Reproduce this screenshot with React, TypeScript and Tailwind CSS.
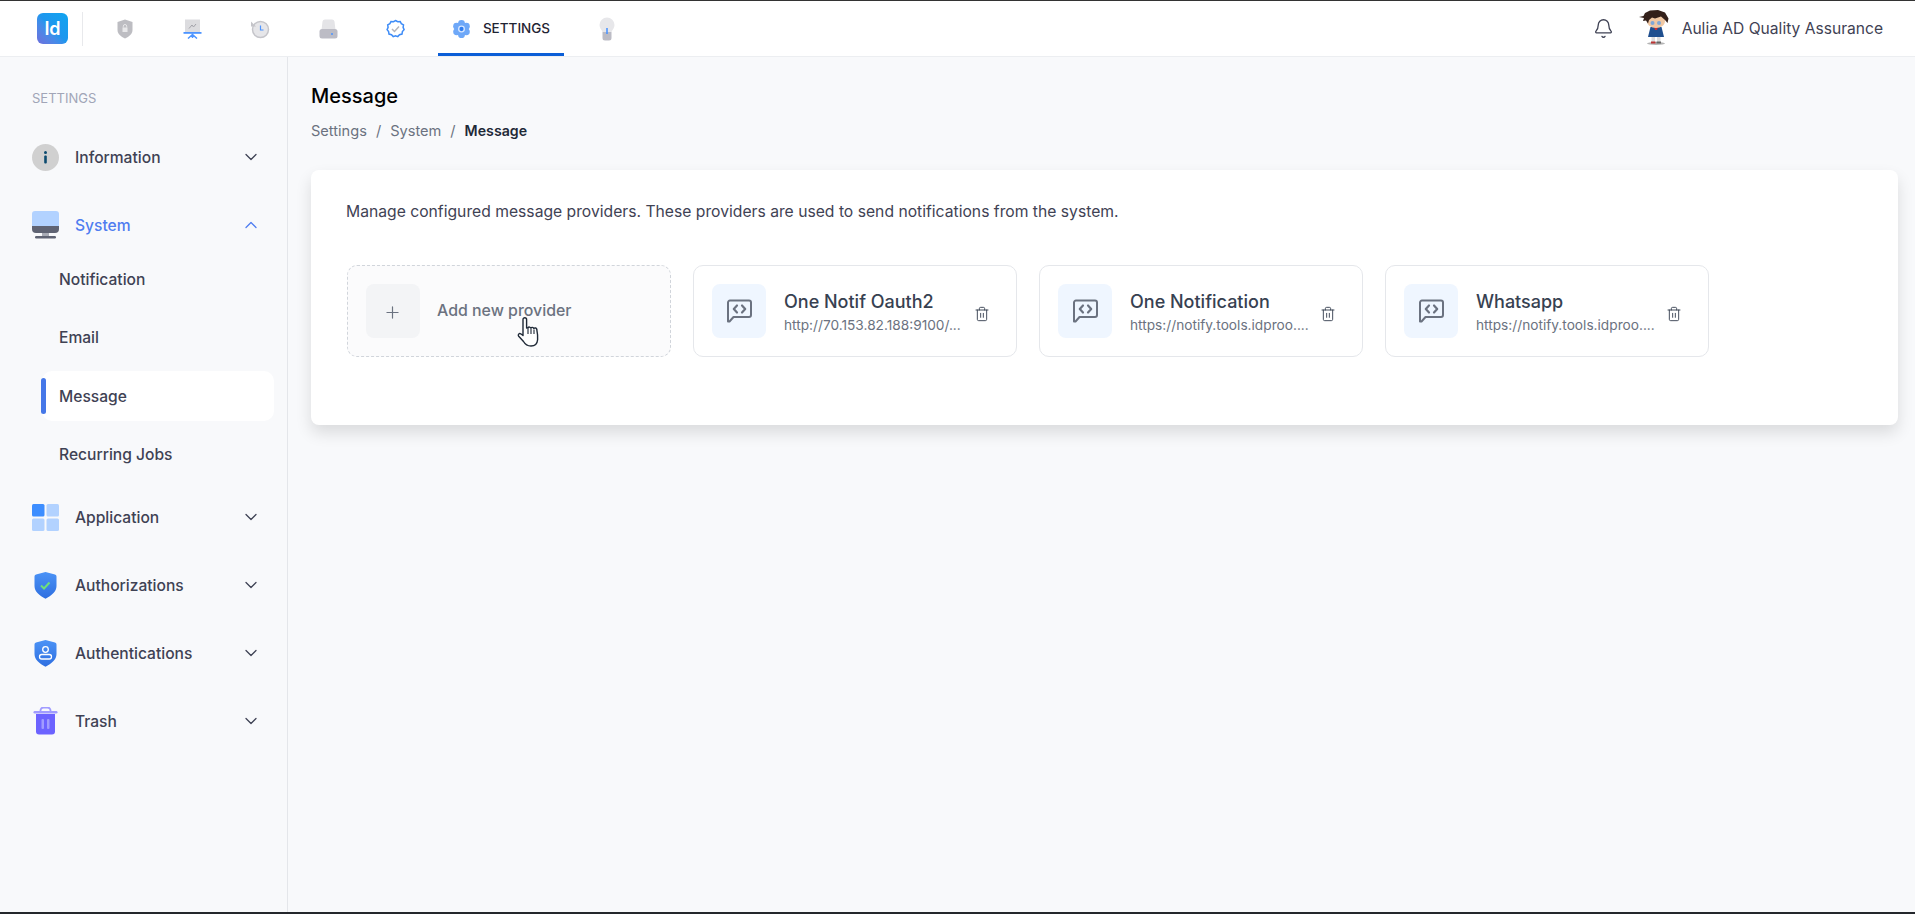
import { Bell, ChevronDown, ChevronUp, Plus, Trash2 } from "lucide-react";
import type { ReactNode } from "react";

const ShieldNavIcon = () => (
  <svg width="18" height="20" viewBox="0 0 18 20">
    <path d="M9 0.500 16.500 3v8c0 4-3.500 6.800-7.500 8.500C5 17.800 1.500 15 1.500 11V3z" fill="#bdbdc2" />
    <path d="M6.500 8.500h5v4.500h-5z" fill="#e8e8ea" />
    <path d="M7.300 8.500V7.200a1.700 1.700 0 0 1 3.400 0v1.300" fill="none" stroke="#e8e8ea" strokeWidth="1" />
  </svg>
);

const BoardNavIcon = () => (
  <svg width="19" height="20" viewBox="0 0 19 20">
    <rect x="2" y="0.500" width="15" height="13" fill="#dcdcdf" />
    <path d="M6 9.500 9 6l1.500 2L13 5" fill="none" stroke="#a3a3aa" strokeWidth="1" />
    <rect x="0.500" y="13" width="18" height="1.800" fill="#4d94ff" />
    <path d="M9.500 14.500V19M9.500 15.500 5 19.500M9.500 15.500l4.500 4" stroke="#4d94ff" strokeWidth="1.500" fill="none" />
  </svg>
);

const HistoryNavIcon = () => (
  <svg width="20" height="20" viewBox="0 0 20 20">
    <circle cx="10.500" cy="10.500" r="8" fill="#e6e6e9" stroke="#c5c5ca" strokeWidth="1.500" />
    <path d="M1 2.500v5h5" fill="#c5c5ca" />
    <path d="M10.500 6.500v4.500h3" fill="none" stroke="#4d94ff" strokeWidth="1.200" />
  </svg>
);

const DiskNavIcon = () => (
  <svg width="19" height="20" viewBox="0 0 19 20">
    <path d="M2.500 11 3.500 2.500A2.500 2.500 0 0 1 6 0.500h7a2.500 2.500 0 0 1 2.500 2L16.500 11z" fill="#e4e4e7" />
    <rect x="0.500" y="10" width="18" height="9.500" rx="2.500" fill="#bcbcc5" />
    <circle cx="13" cy="15" r="1" fill="#4d94ff" />
  </svg>
);

const BadgeNavIcon = () => (
  <svg width="19" height="20" viewBox="0 0 19 20">
    <path
      d="M9.500 1.500l2.200 1.200 2.500-.2 1.100 2.200 2.200 1.200-.4 2.500 1 2.300-1.700 1.900-.4 2.500-2.500.6-1.700 1.900-2.300-.9-2.300.9-1.700-1.900-2.500-.6-.4-2.500L1.100 10.700l1-2.300-.4-2.500 2.200-1.200L5 2.500l2.500.2z"
      fill="#fff"
      stroke="#3e8cf7"
      strokeWidth="1.500"
    />
    <path d="M6 10l2.500 2.500L13 7.500" fill="none" stroke="#b5b5bb" strokeWidth="1.500" />
  </svg>
);

const GearNavIcon = () => (
  <svg width="19" height="20" viewBox="0 0 24 24">
    <g fill="#6ea8f8">
      <circle cx="12" cy="12" r="8.500" />
      <circle cx="12" cy="4.800" r="4.300" />
      <circle cx="12" cy="19.200" r="4.300" />
      <circle cx="5.800" cy="8.400" r="4.300" />
      <circle cx="18.200" cy="8.400" r="4.300" />
      <circle cx="5.800" cy="15.600" r="4.300" />
      <circle cx="18.200" cy="15.600" r="4.300" />
    </g>
    <circle cx="12" cy="12" r="4.400" fill="#d6e6ff" />
    <circle cx="12" cy="12" r="2.700" fill="#2f7df0" />
  </svg>
);

const BulbNavIcon = () => (
  <svg width="16" height="24" viewBox="0 0 16 24">
    <path d="M8 0.500a7.500 7.500 0 0 1 7.500 7.500c0 3-2 4.500-3 7H3.500c-1-2.500-3-4-3-7A7.500 7.500 0 0 1 8 0.500z" fill="#e7e7ea" />
    <path d="M3.500 15h9v6a2.500 2.500 0 0 1-2.500 2.500H6A2.500 2.500 0 0 1 3.500 21z" fill="#bcbcc5" />
    <rect x="7.200" y="11" width="1.600" height="6" fill="#4d94ff" />
  </svg>
);

const InfoIcon = () => (
  <svg width="27" height="27" viewBox="0 0 27 27">
    <circle cx="13.500" cy="13.500" r="13.500" fill="#d0d0d0" />
    <circle cx="13.500" cy="8.500" r="1.500" fill="#0b4a6f" />
    <rect x="12.200" y="11.500" width="2.600" height="8" rx="1" fill="#0b4a6f" />
  </svg>
);

const MonitorIcon = () => (
  <svg width="27" height="28" viewBox="0 0 27 28">
    <path d="M0 3a3 3 0 0 1 3-3h21a3 3 0 0 1 3 3v12H0z" fill="#b2d2ff" />
    <path d="M0 15h27v3a4 4 0 0 1-4 4H4a4 4 0 0 1-4-4z" fill="#5f6373" />
    <rect x="10" y="22" width="7" height="3" fill="#a8abb5" />
    <rect x="3" y="25" width="21" height="2.500" rx="1.200" fill="#5f6373" />
  </svg>
);

const GridIcon = () => (
  <svg width="27" height="27" viewBox="0 0 27 27">
    <rect width="12.500" height="12.500" rx="1.500" fill="#3d8eff" />
    <rect x="14.500" width="12.500" height="12.500" rx="1.500" fill="#b2d2ff" />
    <rect y="14.500" width="12.500" height="12.500" rx="1.500" fill="#b2d2ff" />
    <rect x="14.500" y="14.500" width="12.500" height="12.500" rx="1.500" fill="#b2d2ff" />
  </svg>
);

const ShieldBase = ({ id, children }: { id: string; children: ReactNode }) => (
  <svg width="23" height="27" viewBox="0 0 23 27">
    <defs>
      <linearGradient id={id} x1="0" y1="0" x2="0" y2="1">
        <stop offset="0" stopColor="#4b93f6" />
        <stop offset="1" stopColor="#2f6fe0" />
      </linearGradient>
    </defs>
    <path d="M11.500 0 21 2.500a2 2 0 0 1 1.500 2V14c0 5.500-5 9.800-11 12.700C5.500 23.800.5 19.500.5 14V4.500a2 2 0 0 1 1.500-2z" fill={`url(#${id})`} />
    {children}
  </svg>
);

const TrashIcon = () => (
  <svg width="25" height="28" viewBox="0 0 25 28">
    <path d="M7.500 4V3.500a3 3 0 0 1 3-3h4a3 3 0 0 1 3 3V4" fill="none" stroke="#a19cff" strokeWidth="1.800" />
    <rect x="0.500" y="4" width="24" height="2.500" rx="1.200" fill="#a19cff" />
    <path d="M3 7h19v17.500a3 3 0 0 1-3 3H6a3 3 0 0 1-3-3z" fill="#6c63ff" />
    <rect x="8.500" y="12" width="2.500" height="10" rx="1" fill="#a19cff" />
    <rect x="14" y="12" width="2.500" height="10" rx="1" fill="#a19cff" />
  </svg>
);

const MessageCodeIcon = () => (
  <svg width="27" height="25" viewBox="0 0 27 25" fill="none" stroke="#6b7280" strokeWidth="2">
    <path d="M2 22.500V3.500a2 2 0 0 1 2-2h19a2 2 0 0 1 2 2V16a2 2 0 0 1-2 2H7.500L3.500 22.500z" strokeLinejoin="round" />
    <path d="M11 6.500 7.800 10 11 13.500M16 6.500l3.200 3.500-3.200 3.500" strokeLinecap="round" strokeLinejoin="round" strokeWidth="2.200" />
  </svg>
);

const Avatar = () => (
  <svg width="30" height="37" viewBox="0 0 30 37">
    <ellipse cx="17" cy="33.500" rx="9" ry="1.500" fill="#b5b5b5" />
    <rect x="12.500" y="27" width="3.500" height="5" fill="#dcdcdc" />
    <rect x="18" y="27" width="3.500" height="5" fill="#dcdcdc" />
    <rect x="12" y="31.500" width="4.500" height="2" fill="#b33" />
    <rect x="17.500" y="31.500" width="4.500" height="2" fill="#666" />
    <path d="M11.500 17h11l2.500 10H9z" fill="#1f4f8f" />
    <path d="M15 17h4l-1 3h-2z" fill="#c33" />
    <path d="M8 11c0-4 4-6 9-6s9 2 9 6-4 7-9 7-9-3-9-7z" fill="#f0c8a4" />
    <circle cx="13.500" cy="13" r="2" fill="#7fa8d8" />
    <circle cx="20" cy="13" r="2" fill="#7fa8d8" />
    <path d="M0 7 4.500 6 6 3l5-2.500 8-.5 7 2.500 3.500 6-1 4.500-2.500-3-4-3.500-6 2-3-1-3 2.500-1 3.500-2-3-3 .5 1-3z" fill="#33201a" />
  </svg>
);

const HandCursor = () => (
  <svg width="23" height="31" viewBox="0 0 23 31" className="absolute left-[169px] top-[51px]">
    <path
      d="M6 2.500a1.800 1.800 0 0 1 3.600 0V11l1.400-.4a1.700 1.700 0 0 1 2.800.5 1.700 1.700 0 0 1 3 .4 1.700 1.700 0 0 1 3 1.200c.8 4 1 7 .8 10-.3 3.500-2.500 6.300-6.600 6.300-3.800 0-5.800-1.500-7.500-4.500L1.500 19c-.8-1.300.6-3 2.200-2.200L6 18.500z"
      fill="#fff"
      stroke="#1f2937"
      strokeWidth="1.400"
      strokeLinejoin="round"
    />
    <path d="M11 11v6M14 11.500V17M17 12.500V17" stroke="#1f2937" strokeWidth="1.100" fill="none" />
  </svg>
);

const navIcons = [
  <ShieldNavIcon key="shield" />,
  <BoardNavIcon key="board" />,
  <HistoryNavIcon key="history" />,
  <DiskNavIcon key="disk" />,
  <BadgeNavIcon key="badge" />,
];

const SideRow = ({ icon, label, open = false }: { icon: ReactNode; label: string; open?: boolean }) => (
  <div className="flex h-[54px] items-center pl-8 pr-[26px]">
    <div className="flex w-[27px] shrink-0 justify-center">{icon}</div>
    <span className={`ml-4 flex-1 pt-px text-[15.6px] font-[450] ${open ? "text-[#4f7df0]" : "text-[#3f4254]"}`}>{label}</span>
    {open ? (
      <ChevronUp size={20} strokeWidth={1.5} className="text-[#4f7df0]" />
    ) : (
      <ChevronDown size={20} strokeWidth={1.5} className="text-[#3f4254]" />
    )}
  </div>
);

const SubRow = ({ label, active = false }: { label: string; active?: boolean }) => (
  <div
    className={`relative ml-[42px] mr-[13px] flex h-[50px] items-center pl-[17px] pt-px text-[15.6px] font-[450] text-[#3f4254] ${
      active ? "mt-px rounded-[10px] bg-white" : ""
    }`}
  >
    {active && <div className="absolute left-[-1px] top-[7px] h-9 w-[5px] rounded-sm bg-[#4577e8]" />}
    {label}
  </div>
);

const ProviderCard = ({ name, url }: { name: string; url: string }) => (
  <div className="flex h-[92px] w-[323.5px] items-center rounded-[10px] border border-[#e5e7eb] bg-white pl-[18px] pr-[26px]">
    <div className="flex h-[54px] w-[54px] shrink-0 items-center justify-center rounded-lg bg-[#eff6ff]">
      <MessageCodeIcon />
    </div>
    <div className="ml-[18px] min-w-0 flex-1">
      <div className="text-[18px] leading-[26px] font-[450] text-[#374151]">{name}</div>
      <div className="mt-[1px] whitespace-nowrap text-[13.7px] leading-[18px] text-[#6b7280]">{url}</div>
    </div>
    <Trash2 size={16} strokeWidth={1.4} className="ml-1 mt-[6px] shrink-0 text-[#374151]" />
  </div>
);

export default function App() {
  return (
    <div className="flex h-screen w-full flex-col overflow-hidden border-t border-b-2 border-t-[#333333] border-b-[#24272c] bg-[#f8f9fb] font-[Inter,sans-serif]">
      <header className="flex h-[56px] shrink-0 items-center border-b border-[#eceef1] bg-white pl-[37px] pr-8">
        <div className="flex h-[31px] w-[31px] items-center justify-center rounded-md bg-gradient-to-tr from-[#6b6fdc] via-[#1e96ee] to-[#0ea5f0] text-[18px] font-semibold text-white">
          Id
        </div>
        <div className="ml-[14px] h-[34px] w-px bg-[#e8e9ec]" />
        <div className="ml-[33px] flex items-center gap-[48.5px]">{navIcons}</div>
        <div className="relative ml-[33px] flex h-[55px] w-[126px] items-center justify-center gap-[12px] border-b-[3px] border-[#0b5ed7] pt-[3px]">
          <GearNavIcon />
          <span className="text-[13.500px] font-medium text-[#1f2433]">SETTINGS</span>
        </div>
        <div className="ml-[35px]">
          <BulbNavIcon />
        </div>
        <div className="ml-auto flex items-center">
          <Bell size={21} strokeWidth={1.5} className="text-[#3f4254]" />
          <div className="ml-[25px]">
            <Avatar />
          </div>
          <span className="ml-[13px] text-[15.6px] text-[#3f4254]">Aulia AD Quality Assurance</span>
        </div>
      </header>

      <div className="flex min-h-0 flex-1">
        <aside className="w-[288px] shrink-0 border-r border-[#e4e6ea] pt-[31px]">
          <div className="pl-8 text-[13px] leading-5 text-[#a1a5b7]">SETTINGS</div>
          <nav className="mt-[22px] flex flex-col gap-[14px]">
            <SideRow icon={<InfoIcon />} label="Information" />
            <div className="-mb-[3px]">
              <SideRow icon={<MonitorIcon />} label="System" open />
              <div className="mt-[2px] flex flex-col gap-2">
                <SubRow label="Notification" />
                <SubRow label="Email" />
                <SubRow label="Message" active />
                <SubRow label="Recurring Jobs" />
              </div>
            </div>
            <SideRow icon={<GridIcon />} label="Application" />
            <SideRow
              icon={
                <ShieldBase id="shieldCheck">
                  <path d="M7 13.500l3 3 5.500-6" fill="none" stroke="#6fe07a" strokeWidth="2" />
                </ShieldBase>
              }
              label="Authorizations"
            />
            <SideRow
              icon={
                <ShieldBase id="shieldUser">
                  <circle cx="11.500" cy="9.500" r="2.800" fill="none" stroke="#fff" strokeWidth="1.300" />
                  <rect x="5.500" y="14.500" width="12" height="4.500" rx="2.200" fill="none" stroke="#fff" strokeWidth="1.300" />
                </ShieldBase>
              }
              label="Authentications"
            />
            <SideRow icon={<TrashIcon />} label="Trash" />
          </nav>
        </aside>

        <main className="min-w-0 flex-1 pl-[23px] pr-[17px] pt-[25px]">
          <h1 className="text-[20px] leading-7 font-[450] text-black">Message</h1>
          <div className="mt-[11px] flex gap-[9px] text-[14.6px] leading-5 text-[#6b7280]">
            <span>Settings</span>
            <span>/</span>
            <span>System</span>
            <span>/</span>
            <span className="text-[14.2px] font-semibold text-[#1f2937]">Message</span>
          </div>
          <section className="mt-[29px] rounded-lg bg-white pb-[68px] pl-9 pr-9 pt-[31px] shadow-[0_8px_16px_rgba(0,0,0,0.12)]">
            <p className="-ml-px text-[15.7px] leading-[22px] text-[#3f4254]">
              Manage configured message providers. These providers are used to send notifications from the system.
            </p>
            <div className="mt-[42px] flex gap-[22.5px]">
              <div className="relative flex h-[92px] w-[323.5px] items-center rounded-[10px] border border-dashed border-[#d1d5db] bg-[#fbfbfc] pl-[18px]">
                <div className="flex h-[54px] w-[54px] items-center justify-center rounded-lg bg-[#f3f4f6]">
                  <Plus size={19} strokeWidth={1.5} className="-ml-px mt-[2px] text-[#6b7280]" />
                </div>
                <span className="ml-[17px] text-[15.9px] font-[450] text-[#6b7280]">Add new provider</span>
                <HandCursor />
              </div>
              <ProviderCard name="One Notif Oauth2" url="http://70.153.82.188:9100/..." />
              <ProviderCard name="One Notification" url="https://notify.tools.idproo...." />
              <ProviderCard name="Whatsapp" url="https://notify.tools.idproo...." />
            </div>
          </section>
        </main>
      </div>
    </div>
  );
}
